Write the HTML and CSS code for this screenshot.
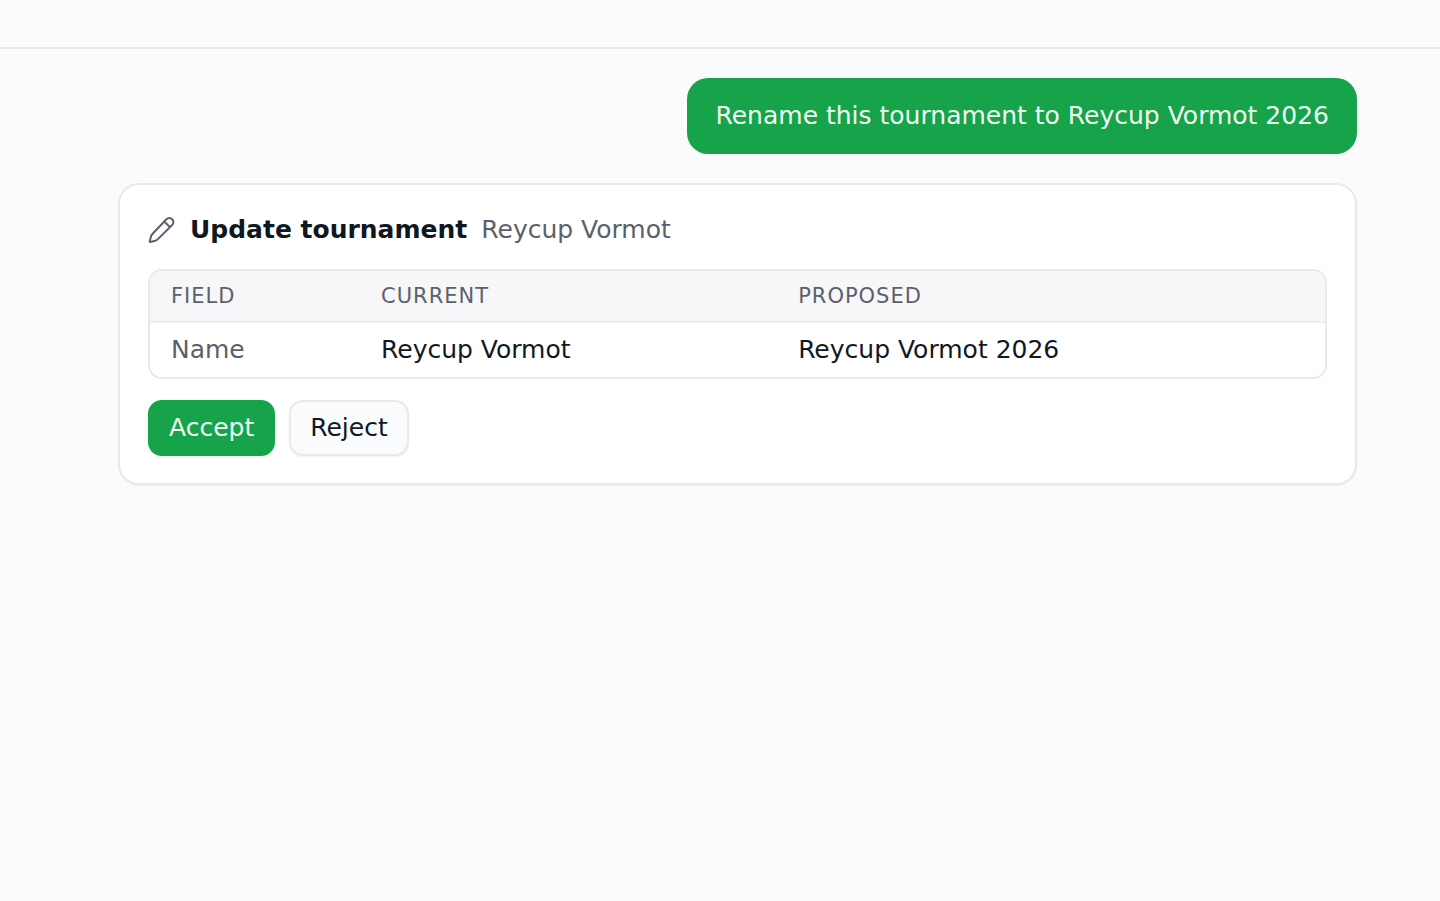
FILE: index.html
```html
<!DOCTYPE html>
<html lang="en">
	<head>
		<meta charset="UTF-8" />
		<meta name="viewport" content="width=device-width, initial-scale=1.0" />
		<title>Update tournament</title>
		<link rel="stylesheet" href="styles.css">
	</head>
	<body>
		<header class="topbar"></header>
		<main class="chat">
			<p class="message">Rename this tournament to Reycup Vormot 2026</p>
			<section class="card">
				<div class="card-title">
					<svg class="icon" viewBox="0 0 28 28" aria-hidden="true">
						<path d="M18.4 3.2a4 4 0 0 1 5.8 0a4 4 0 0 1 0 5.8L9.6 23.4Q8.6 24.4 7.2 24.8L2.4 26Q1.4 26.2 1.7 25.2L3 20.4Q3.4 19 4.4 18ZM16.2 5.4L22 11.2" />
					</svg>
					<h2>Update tournament</h2>
					<span class="muted">Reycup Vormot</span>
				</div>
				<div class="table-wrap">
					<table>
						<thead>
							<tr>
								<th class="col-field" scope="col">Field</th>
								<th class="col-current" scope="col">Current</th>
								<th scope="col">Proposed</th>
							</tr>
						</thead>
						<tbody>
							<tr>
								<td class="muted">Name</td>
								<td>Reycup Vormot</td>
								<td>Reycup Vormot 2026</td>
							</tr>
						</tbody>
					</table>
				</div>
				<div class="actions">
					<button class="accept" type="button">Accept</button>
					<button class="reject" type="button">Reject</button>
				</div>
			</section>
		</main>
	</body>
</html>
```
FILE: styles.css
```css
* {
	box-sizing: border-box;
}
body {
	margin: 0px;
	min-height: 100vh;
	background: #fafbfd;
	color: #10181f;
	font-family: "DejaVu Sans", sans-serif;
	font-size: 25px;
	line-height: 36px;
}
.topbar {
	height: 49px;
	border-bottom: 2px solid #e7e9eb;
}
.chat {
	display: flex;
	flex-direction: column;
	gap: 29px;
	padding: 29px 83px 29px 118px;
}
.message {
	align-self: flex-end;
	margin: 0px;
	padding: 20px 28px;
	border-radius: 21px;
	background: #16a34a;
	color: #f0fdf4;
}
.card {
	display: flex;
	flex-direction: column;
	gap: 21px;
	padding: 27px 28px;
	border: 2px solid #e7e9eb;
	border-radius: 21px;
	background: white;
	box-shadow: 0px 1px 2px rgba(0, 0, 0, 0.06);
}
.card-title {
	display: flex;
	align-items: center;
	gap: 14px;
}
.card-title h2 {
	margin: 0px;
	font-size: inherit;
}
.icon {
	flex: none;
	width: 28px;
	height: 28px;
	fill: none;
	stroke: #5b616b;
	stroke-width: 2;
	stroke-linecap: round;
	stroke-linejoin: round;
}
.muted {
	color: #5b616b;
}
.table-wrap {
	overflow: hidden;
	border: 2px solid #e7e9eb;
	border-radius: 14px;
}
table {
	width: 100%;
	border-collapse: collapse;
	text-align: left;
}
th {
	padding: 7px 21px;
	border-bottom: 2px solid #ebedef;
	background: #f7f7fa;
	color: #5b616b;
	font-size: 21px;
	font-weight: normal;
	letter-spacing: 1px;
	text-transform: uppercase;
}
td {
	padding: 9px 21px;
}
.col-field {
	width: 210px;
}
.col-current {
	width: 35.5%;
}
.actions {
	display: flex;
	gap: 14px;
}
button {
	padding: 8px 19px;
	border: 2px solid #e7e9eb;
	border-radius: 14px;
	background: #fafbfd;
	color: inherit;
	font: inherit;
	cursor: pointer;
	box-shadow: 0px 1px 2px rgba(0, 0, 0, 0.06);
}
.accept {
	border-color: #16a34a;
	background: #16a34a;
	color: #f0fdf4;
}
```
